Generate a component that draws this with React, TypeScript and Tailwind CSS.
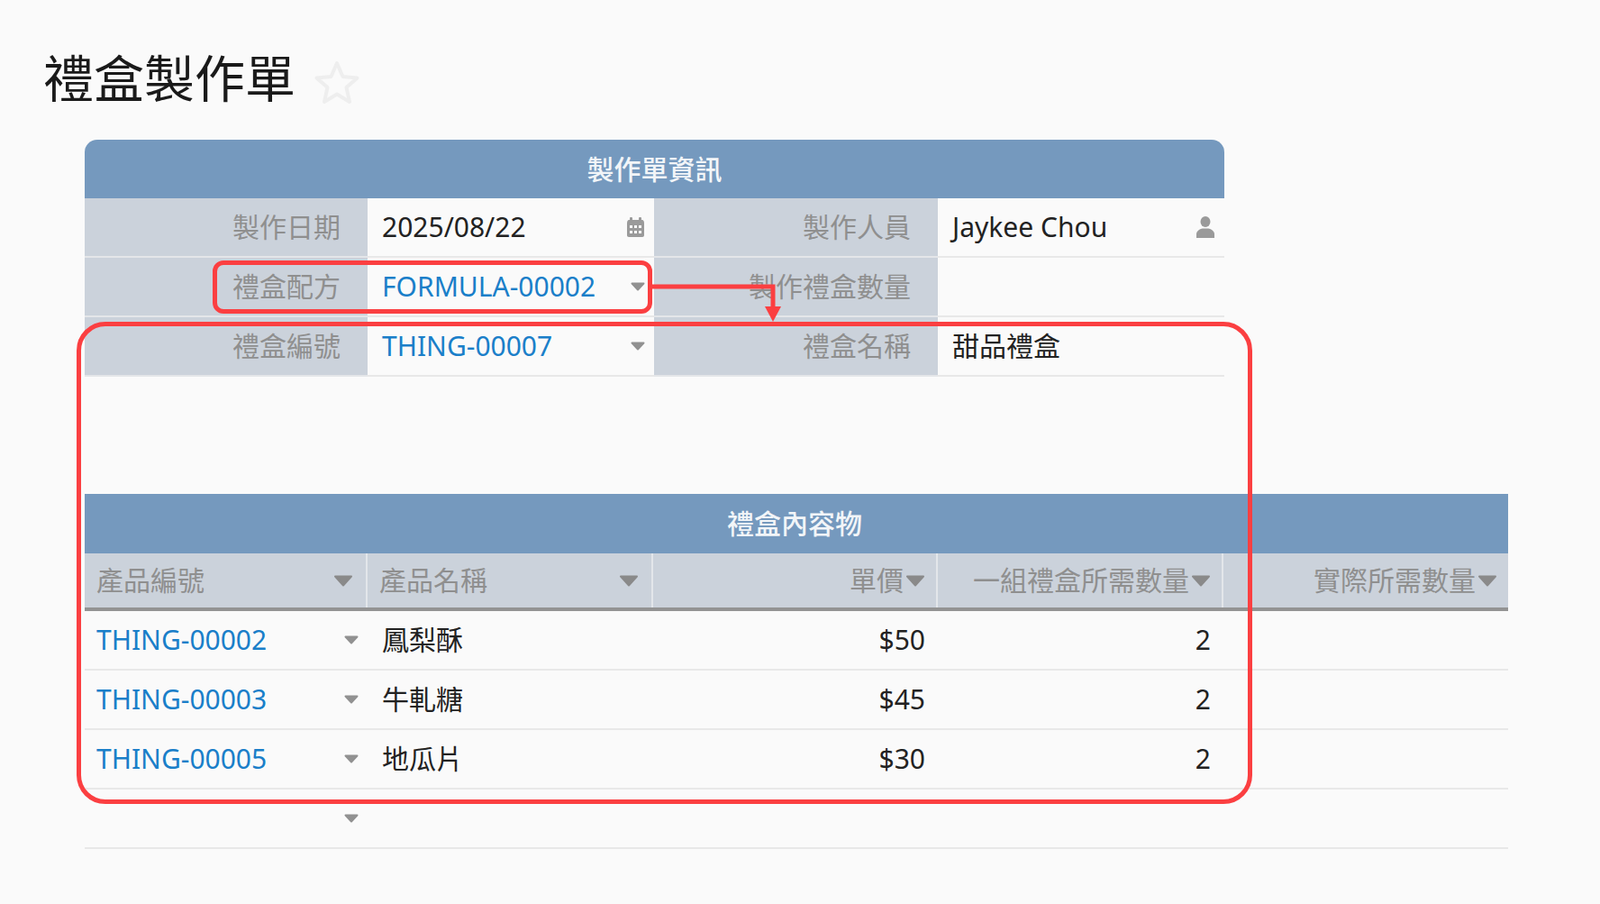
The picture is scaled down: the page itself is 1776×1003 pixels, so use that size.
const font = "font-['Noto_Sans','Noto_Sans_CJK_TC',sans-serif]";

function Caret({ big = false }: { big?: boolean }) {
  return big ? (
    <svg width="22" height="13" viewBox="0 0 22 13" className="shrink-0">
      <path d="M2 1.5h18L11 11.5z" fill="#8a8a8a" stroke="#8a8a8a" strokeWidth="2" strokeLinejoin="round" />
    </svg>
  ) : (
    <svg width="16" height="10" viewBox="0 0 16 10" className="shrink-0">
      <path d="M1.5 1.5h13L8 8.5z" fill="#919191" stroke="#919191" strokeWidth="2" strokeLinejoin="round" />
    </svg>
  );
}

function CalendarIcon() {
  return (
    <svg width="21" height="22" viewBox="0 0 21 22" fill="#9a9a9a">
      <rect x="4" y="0" width="3" height="5" rx="1" />
      <rect x="14" y="0" width="3" height="5" rx="1" />
      <path d="M1 6.5C1 4.5 2 3 3 3h15c1 0 2 1.500 2 3.500V20c0 1-.8 2-2 2H3c-1.200 0-2-1-2-2z" />
      <g fill="#fafafa">
        <rect x="4" y="9" width="3" height="3" />
        <rect x="9" y="9" width="3" height="3" />
        <rect x="14" y="9" width="3" height="3" />
        <rect x="4" y="15" width="3" height="3" />
        <rect x="9" y="15" width="3" height="3" />
        <rect x="14" y="15" width="3" height="3" />
      </g>
    </svg>
  );
}

function PersonIcon() {
  return (
    <svg width="22" height="24" viewBox="0 0 22 24" fill="#9a9a9a">
      <ellipse cx="11" cy="6" rx="5.500" ry="6" />
      <path d="M1 24v-4c0-4 4-6 7-6.500h6c3 .5 7 2.500 7 6.500v4z" />
    </svg>
  );
}

function Label({ children }: { children: React.ReactNode }) {
  return (
    <div className="flex items-center justify-end bg-[#cbd2db] pr-[30px] text-[#8f8f8f] border-b-2 border-[#e4e6e9]">
      {children}
    </div>
  );
}

function Value({ children, icon }: { children?: React.ReactNode; icon?: React.ReactNode }) {
  return (
    <div className="flex items-center justify-between pl-4 pr-[10px] border-b-2 border-[#e8e8e8] text-[#222]">
      <span>{children}</span>
      {icon}
    </div>
  );
}

function HeadCell({ text, right = false }: { text: string; right?: boolean }) {
  return (
    <div
      className={
        right
          ? "flex items-center justify-end gap-[2px] pr-3 border-r-2 border-[#e3e6ea] last:border-r-0"
          : "flex items-center justify-between pl-[13px] pr-[14px] border-r-2 border-[#e3e6ea]"
      }
    >
      <span>{text}</span>
      <Caret big />
    </div>
  );
}

const rows = [
  { id: "THING-00002", name: "鳳梨酥", price: "$50", qty: "2" },
  { id: "THING-00003", name: "牛軋糖", price: "$45", qty: "2" },
  { id: "THING-00005", name: "地瓜片", price: "$30", qty: "2" },
  { id: "", name: "", price: "", qty: "" },
];

export default function App() {
  return (
    <div className={`relative h-[1003px] w-[1776px] overflow-hidden bg-[#fafafa] text-[30px] leading-none ${font}`}>
      <div className="flex h-[155px] items-start pl-12 pt-[58px]">
        <h1 className="text-[56px] leading-none font-normal text-[#1a1a1a]">禮盒製作單</h1>
        <svg width="52" height="50" viewBox="0 0 52 50" className="ml-[20px] mt-[8px]" fill="none" stroke="#eeeeee" strokeWidth="4" strokeLinejoin="round">
          <path d="M26 4l6.500 15 16 1.500-12 10.500 3.500 16L26 38.500 12 47l3.500-16-12-10.500 16-1.500z" />
        </svg>
      </div>

      <div className="ml-[94px] w-[1265px]">
        <div className="flex h-[65px] items-center justify-center rounded-t-[14px] bg-[#7599be] font-medium text-[#f2f5f8]">
          製作單資訊
        </div>
        <div className="grid grid-cols-[314px_318px_315px_318px] auto-rows-[66px]">
          <Label>製作日期</Label>
          <Value icon={<CalendarIcon />}>2025/08/22</Value>
          <Label>製作人員</Label>
          <Value icon={<PersonIcon />}>Jaykee Chou</Value>
          <Label>禮盒配方</Label>
          <Value icon={<Caret />}><span className="text-[#1a7fc9]">FORMULA-00002</span></Value>
          <Label>製作禮盒數量</Label>
          <Value />
          <Label>禮盒編號</Label>
          <Value icon={<Caret />}><span className="text-[#1a7fc9]">THING-00007</span></Value>
          <Label>禮盒名稱</Label>
          <Value>甜品禮盒</Value>
        </div>
      </div>

      <div className="ml-[94px] mt-[130px] w-[1580px]">
        <div className="flex h-[66px] items-center pl-[713px] bg-[#7599be] font-medium text-[#f2f5f8]">
          禮盒內容物
        </div>
        <div className="grid h-[64px] grid-cols-[314px_317px_316px_317px_316px] border-b-4 border-[#939393] bg-[#cbd2db] text-[#8f8f8f]">
          <HeadCell text="產品編號" />
          <HeadCell text="產品名稱" />
          <HeadCell text="單價" right />
          <HeadCell text="一組禮盒所需數量" right />
          <HeadCell text="實際所需數量" right />
        </div>
        {rows.map((r, i) => (
          <div key={i} className="grid h-[66px] grid-cols-[314px_317px_316px_317px_316px] items-center border-b-2 border-[#e8e8e8] text-[#222]">
            <div className="flex items-center justify-between pl-[13px] pr-[10px]">
              <span className="text-[#1a7fc9]">{r.id}</span>
              <Caret />
            </div>
            <div className="pl-4">{r.name}</div>
            <div className="pr-[14px] text-right">{r.price}</div>
            <div className="pr-[14px] text-right">{r.qty}</div>
            <div />
          </div>
        ))}
      </div>

      {/* annotation overlays */}
      <div className="absolute left-[236px] top-[289px] h-[59px] w-[488px] rounded-[12px] border-[5px] border-[#fb3f41]" />
      <div className="absolute left-[85px] top-[357px] h-[535px] w-[1305px] rounded-[32px] border-[5px] border-[#fb3f41]" />
      <svg width="150" height="50" viewBox="0 0 150 50" className="absolute left-[722px] top-[314px]" fill="none">
        <path d="M0 4h136v26" stroke="#fb3f41" strokeWidth="5" />
        <path d="M127 26h18l-9 17z" fill="#fb3f41" />
      </svg>
    </div>
  );
}
